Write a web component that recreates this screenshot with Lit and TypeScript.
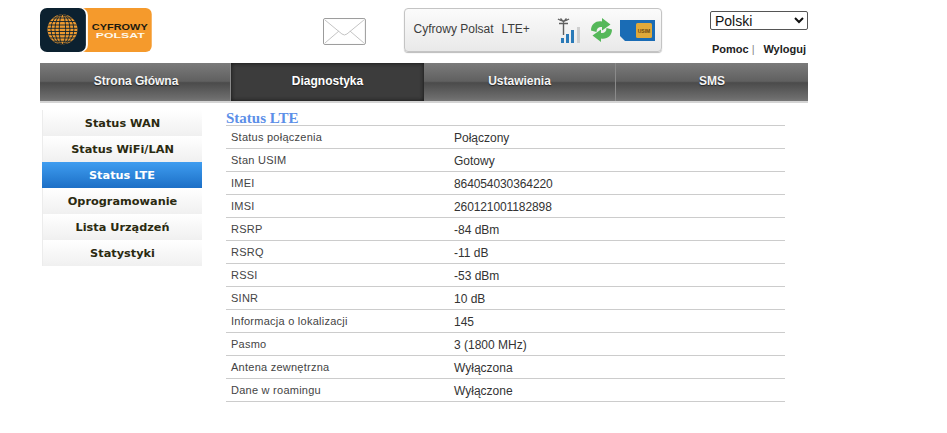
import { LitElement, html, css, svg } from "lit";
import { customElement } from "lit/decorators.js";
import { classMap } from "lit/directives/class-map.js";

const ROWS: [string, string][] = [
  ["Status połączenia", "Połączony"],
  ["Stan USIM", "Gotowy"],
  ["IMEI", "864054030364220"],
  ["IMSI", "260121001182898"],
  ["RSRP", "-84 dBm"],
  ["RSRQ", "-11 dB"],
  ["RSSI", "-53 dBm"],
  ["SINR", "10 dB"],
  ["Informacja o lokalizacji", "145"],
  ["Pasmo", "3 (1800 MHz)"],
  ["Antena zewnętrzna", "Wyłączona"],
  ["Dane w roamingu", "Wyłączone"],
];
const NAV = ["Strona Główna", "Diagnostyka", "Ustawienia", "SMS"];
const SIDE = ["Status WAN", "Status WiFi/LAN", "Status LTE", "Oprogramowanie", "Lista Urządzeń", "Statystyki"];

const globe = () => {
  const lines = [];
  for (const rx of [3.2, 7.5, 11.5]) {
    lines.push(svg`<ellipse rx=${rx} ry="15" fill="none" stroke="#0c2130" stroke-width=".9"/>`);
  }
  for (const y of [-11.5, -8, -4.5, -1.2, 2, 5.2, 8.5, 11.8]) {
    lines.push(svg`<path d="M-15 ${y} H15" stroke="#0c2130" stroke-width=".9"/>`);
  }
  return lines;
};

@customElement("app-root")
export class AppRoot extends LitElement {
  static styles = css`
    :host { display: block; font-family: "Liberation Sans", Arial, sans-serif; background: #fff; height: 433px; overflow: hidden; }
    .page { width: 768px; margin-left: 40px; }
    .top { display: flex; height: 63px; }
    .logo { margin-top: 8px; width: 112px; height: 44px; display: block; }
    .mail { margin: 18px 0 0 171px; width: 43px; height: 27px; display: block; }
    .status { margin: 8px 0 0 38px; box-sizing: border-box; width: 259px; height: 44px; border: 1px solid #c4c4c4; border-radius: 4px;
      background: linear-gradient(#fbfbfb, #e9e9e9); box-shadow: 0 1px 1px #bbb; display: flex; align-items: center; font-size: 12px; color: #3c3c3c; padding-left: 9px; }
    .carrier { width: 88px; position: relative; top: -1px; }
    .net { width: 50px; position: relative; top: -1px; }
    .icons { display: flex; align-items: center; }
    .sig { margin-left: 5px; display: block; }
    .ref { margin-left: 5px; display: block; }
    .sim { margin: 1px 0 0 7px; display: block; }
    .right { margin-left: 48px; width: 98px; display: flex; flex-direction: column; align-items: flex-end; }
    select { margin-top: 11px; width: 98px; height: 19px; font: 14px "Liberation Sans", Arial, sans-serif; color: #111; background: #fff; border: 1px solid #555; border-radius: 2px; padding: 0; }
    .links { margin: 13px 2px 0 0; font-size: 11px; font-weight: bold; color: #222; display: flex; width: 94px; justify-content: space-between; }
    .links i { font-style: normal; font-weight: normal; color: #888; margin: 0 auto 0 3px; }
    nav { display: grid; grid-template-columns: 191px 193px 192px 192px; height: 38px; border-bottom: 2px solid #d4d4d4; background: linear-gradient(#7b7b7b 0, #606060 48%, #4b4b4b 52%, #6c6c6c 92%, #777 100%); }
    nav a { box-sizing: border-box; border-right: 1px solid #8a8a8a; display: flex; align-items: center; justify-content: center; color: #f4f4f4; font-size: 12px; font-weight: bold; text-shadow: 0 1px 1px #222; padding-bottom: 2px; }
    nav a:first-child { padding-left: 2px; }
    nav a:last-child { border-right: 0; }
    nav a.on { background: #3c3c3c; box-shadow: inset 0 0 4px #111; border-right: 0; color: #fff; }
    .body { display: flex; align-items: flex-start; margin-top: 7px; }
    .side { margin-left: 2px; width: 160px; font: bold 11.3px "DejaVu Sans", Verdana, sans-serif; color: #2b2a10; border-left: 1px solid #ececec; box-sizing: border-box; }
    .side div { height: 26px; box-sizing: border-box; display: flex; align-items: center; justify-content: center; background: linear-gradient(#fff, #f0f0f0); }
    .side div.on { background: linear-gradient(#3f9df0, #1c6fc6); color: #fff; margin-left: -1px; }
    .main { margin-left: 24px; width: 559px; }
    h2 { margin: 0; font: bold 15px/16px "Liberation Serif", "Times New Roman", serif; color: #5c8fe8; height: 15px; border-bottom: 1px solid #ccc; }
    .row { display: flex; height: 23px; box-sizing: border-box; border-bottom: 1px solid #ccc; align-items: center; font-size: 12px; color: #333; }
    .row .k { width: 228px; padding-left: 5px; box-sizing: border-box; font-size: 11px; letter-spacing: .25px; color: #444; }
    .v { padding-top: 2px; }
    .num { letter-spacing: -.1px; }
  `;

  render() {
    return html`<div class="page">
      <div class="top">
        <svg class="logo" viewBox="0 0 112 44">
          <rect x="40" width="72" height="44" rx="6" fill="#f59a2c"/>
          <rect x="0" width="48" height="44" rx="7" fill="#fff"/>
          <rect x="0" width="46" height="44" rx="7" fill="#0c2130"/>
          <g transform="translate(22.5 21.5)">
            <clipPath id="g"><circle r="15"/></clipPath>
            <circle r="15" fill="#ee9a30"/>
            <g clip-path="url(#g)">${globe()}</g>
          </g>
          <text x="80" y="22.5" text-anchor="middle" font-family="Liberation Sans" font-weight="bold" font-size="8.5" textLength="56" lengthAdjust="spacingAndGlyphs" fill="#201a10">CYFROWY</text>
          <text x="80.5" y="30" text-anchor="middle" font-family="Liberation Sans" font-weight="bold" font-size="8" textLength="49" lengthAdjust="spacingAndGlyphs" fill="#fff8ea">POLSAT</text>
        </svg>
        <svg class="mail" viewBox="0 0 43 27">
          <rect x=".5" y=".5" width="42" height="26" rx="1.5" fill="#fff" stroke="#9a9a9a"/>
          <path d="M2 2 L19 16 Q21.5 18 24 16 L41 2 M2 25 L16 13 M41 25 L27 13" fill="none" stroke="#c4c4c4"/>
        </svg>
        <div class="status">
          <span class="carrier">Cyfrowy Polsat</span><span class="net">LTE+</span>
          <div class="icons">
            <svg class="sig" width="28" height="28" viewBox="0 0 28 28">
              <path d="M1 3 Q6.500 7 12 3 M3.500 2.500 L6.500 6 L9.500 2.500 M2 7.500 H11 M6.500 7.500 V19" fill="none" stroke="#5f5f5f" stroke-width="1.4"/>
              <rect x="4" y="22" width="3" height="5" fill="#2a7ab8"/>
              <rect x="9" y="18" width="3" height="9" fill="#2a7ab8"/>
              <rect x="14" y="14" width="3" height="13" fill="#2a7ab8"/>
              <rect x="20" y="11" width="3" height="16" fill="#cfcfcf"/>
            </svg>
            <svg class="ref" width="23" height="24" viewBox="0 0 23 24">
              <path d="M1 12.5 C1 6 6 2.5 12 3.5 L12 0 L20.5 6.5 L12 12.5 L12 9 C9 8.5 6.5 10 6.5 14 Z" fill="#55b85a"/>
              <path d="M22 11.5 C22 18 17 21.5 11 20.5 L11 24 L2.5 17.5 L11 11.5 L11 15 C14 15.5 16.5 14 16.5 10 Z" fill="#55b85a"/>
            </svg>
            <svg class="sim" width="35" height="21" viewBox="0 0 35 21">
              <path d="M0 0 H35 V21 H5 L0 16 Z" fill="#1a6cb5"/>
              <rect x="16" y="3" width="16" height="15" rx="1.5" fill="#e0a93a"/>
              <text x="24" y="12.5" text-anchor="middle" font-size="5" font-weight="bold" font-family="Liberation Sans" fill="#6b4a10">USIM</text>
            </svg>
          </div>
        </div>
        <div class="right">
          <select><option>Polski</option></select>
          <div class="links"><span>Pomoc</span><i>|</i><span>Wyloguj</span></div>
        </div>
      </div>
      <nav>${NAV.map((n, i) => html`<a class=${i === 1 ? "on" : ""}>${n}</a>`)}</nav>
      <div class="body">
        <div class="side">${SIDE.map((s, i) => html`<div class=${i === 2 ? "on" : ""}>${s}</div>`)}</div>
        <div class="main">
          <h2>Status LTE</h2>
          ${ROWS.map(([k, v]) => html`<div class="row"><span class="k">${k}</span><span class=${classMap({ v: true, num: /^\d{15}$/.test(v) })}>${v}</span></div>`)}
        </div>
      </div>
    </div>`;
  }
}
